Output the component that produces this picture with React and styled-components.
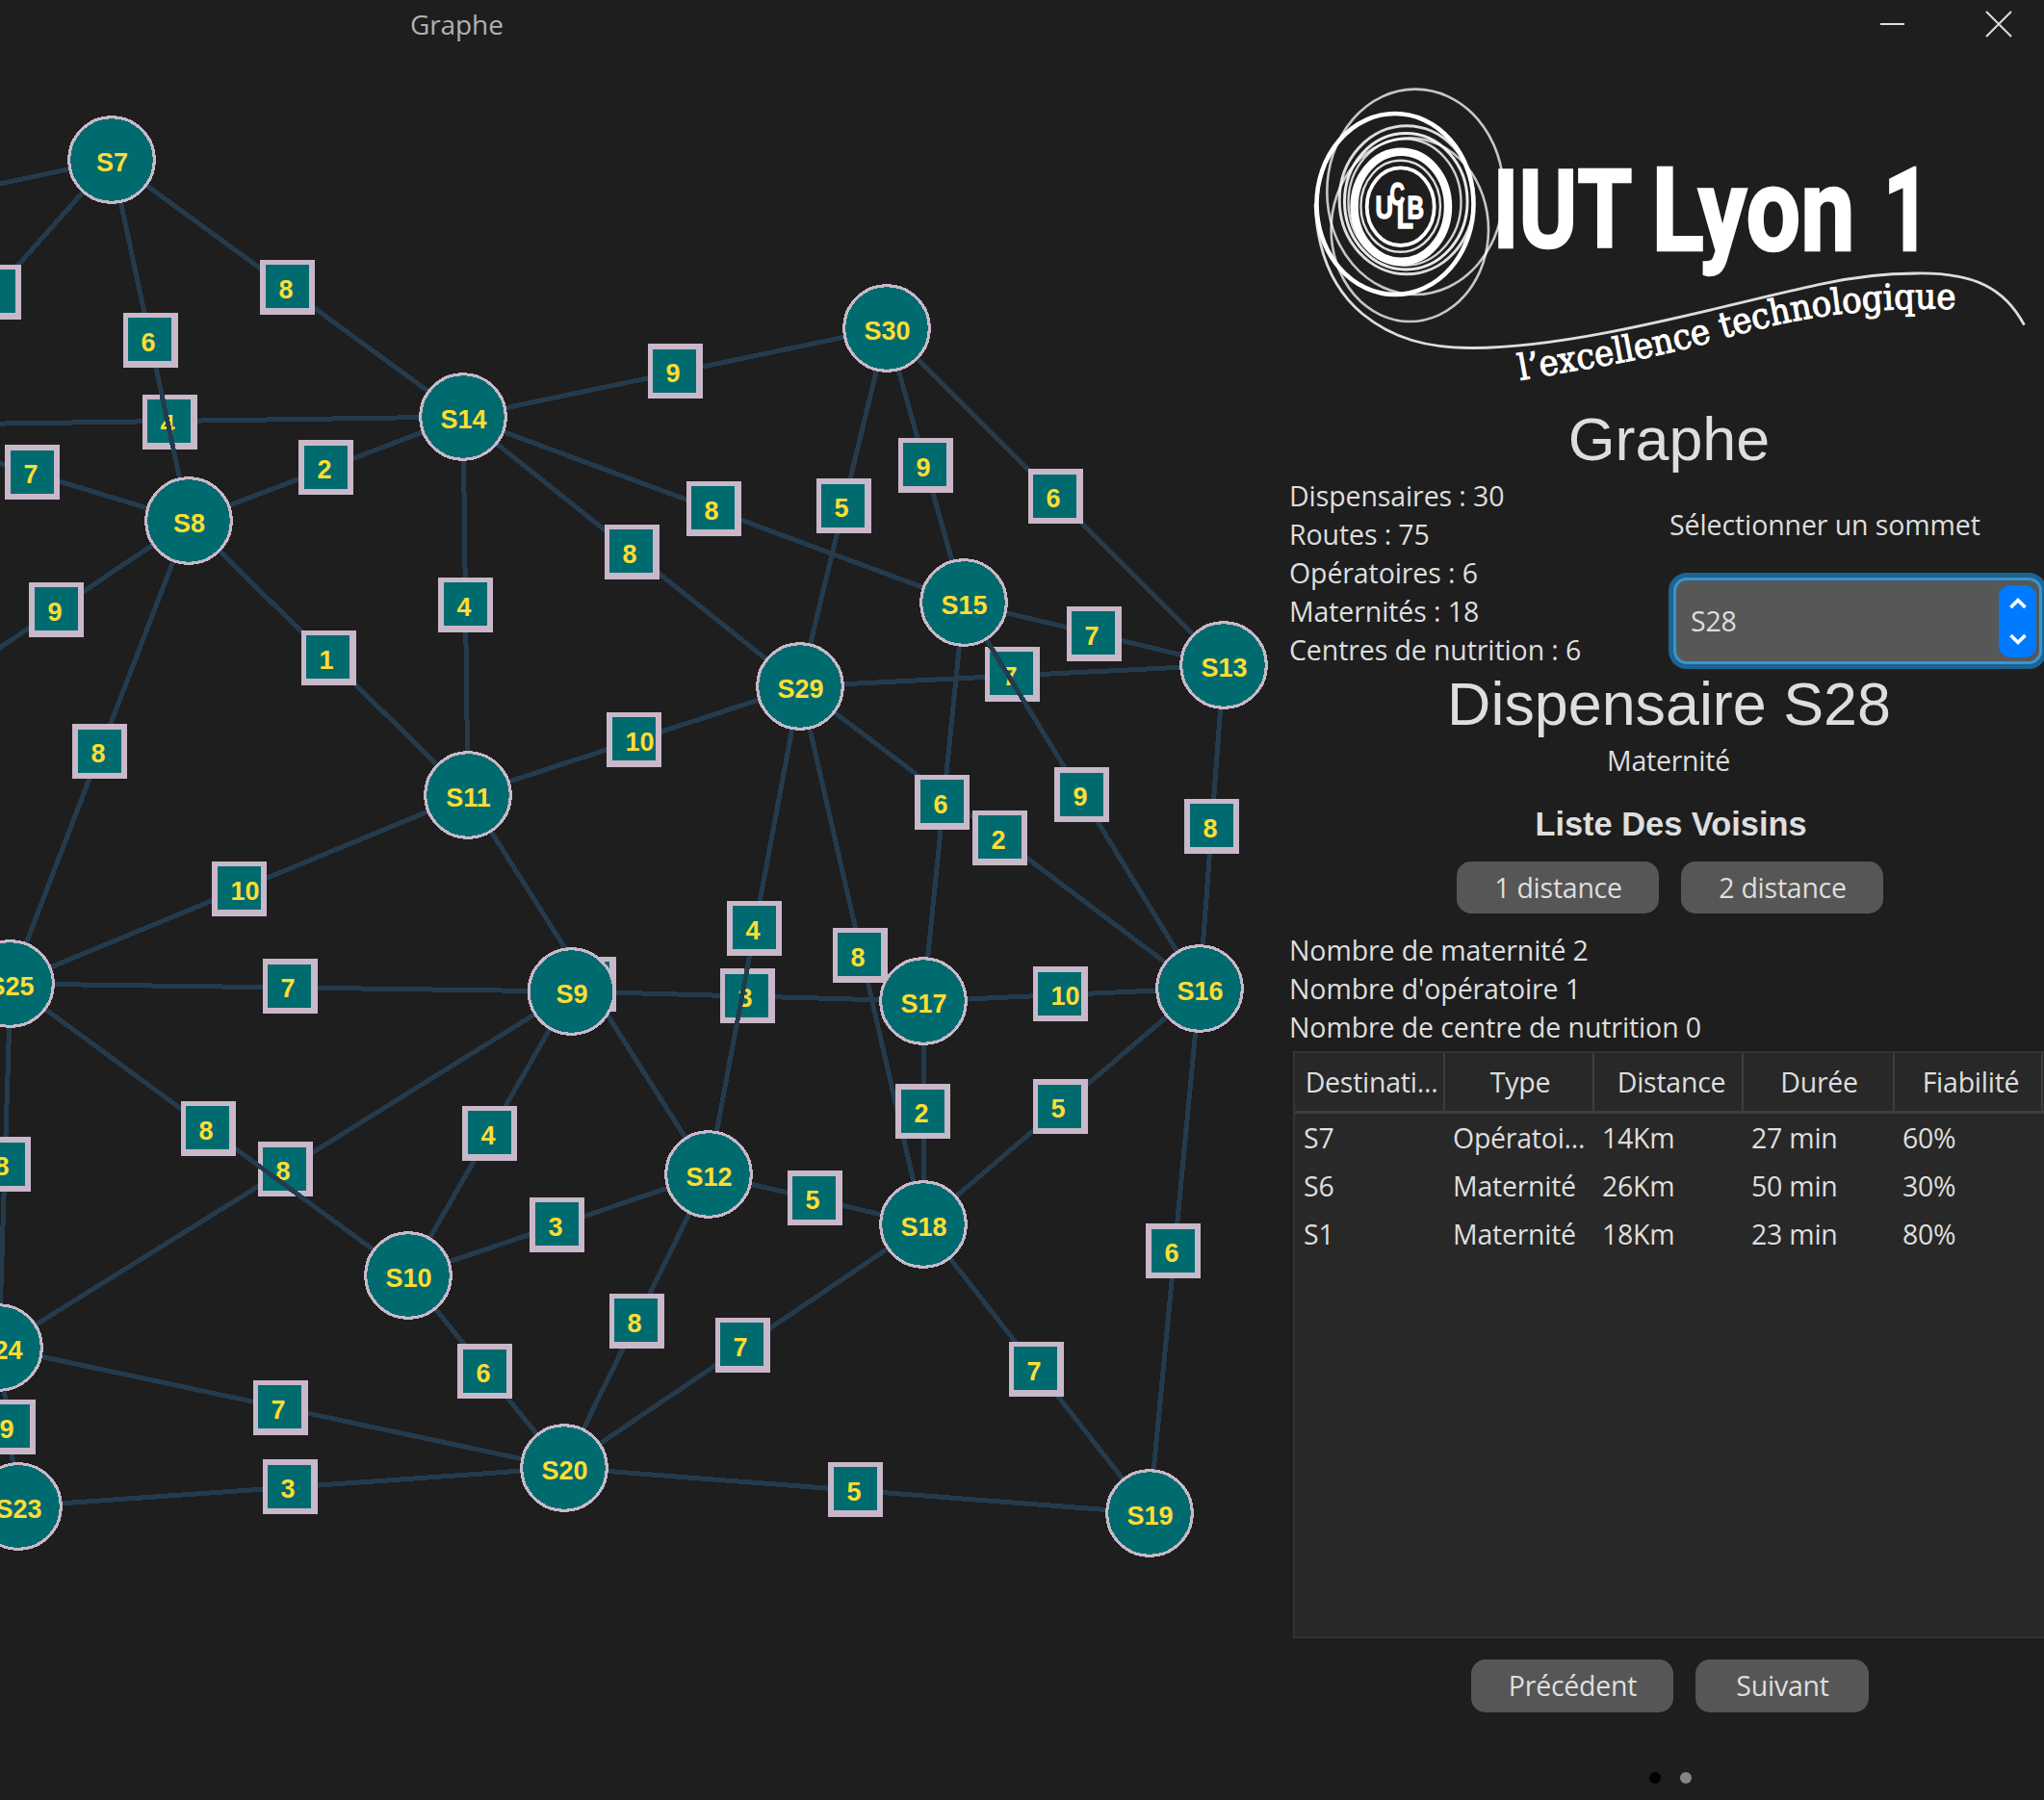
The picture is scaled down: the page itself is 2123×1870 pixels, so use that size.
import React from "react";
import styled, { createGlobalStyle } from "styled-components";

const UI_FONT = `"Open Sans", "Noto Sans", sans-serif`;
const HEAD_FONT = `"Liberation Sans", Arial, sans-serif`;

const GlobalStyle = createGlobalStyle`
  * { box-sizing: border-box; }
  html, body { margin: 0; padding: 0; background: #1e1e1e; overflow: hidden; }
`;

const Window = styled.div`
  width: 2123px;
  height: 1870px;
  display: flex;
  flex-direction: column;
  background: #1e1e1e;
  color: #dedede;
  font-family: ${UI_FONT};
  font-size: 28.5px;
  letter-spacing: -0.25px;
  overflow: hidden;
`;

const TitleBar = styled.header`
  height: 52px;
  flex: none;
  display: flex;
  align-items: flex-start;
  justify-content: space-between;
  padding: 0 33px 0 426px;
`;

const WindowTitle = styled.span`
  font-size: 28px;
  line-height: 50px;
  letter-spacing: -0.1px;
  color: #b2b2b2;
`;

const WindowControls = styled.div`
  display: flex;
  align-items: center;
  gap: 84px;
  padding-top: 11px;
`;

const Body = styled.main`
  display: flex;
  flex: 1;
`;

const GraphCanvas = styled.svg`
  width: 1340px;
  height: 1818px;
  display: block;
  flex: none;
  font: bold 27px ${HEAD_FONT};
  letter-spacing: 0;
`;

const Panel = styled.aside`
  width: 783px;
  padding-top: 18px;
  display: flex;
  flex-direction: column;
`;

const Logo = styled.svg`
  width: 783px;
  height: 350px;
  display: block;
  flex: none;
  letter-spacing: 0;
`;

const Heading = styled.h1`
  margin: 0;
  width: 787px;
  text-align: center;
  font: 400 62.8px/${(p) => p.$line}px ${HEAD_FONT};
  letter-spacing: 0;
`;

const InfoGrid = styled.section`
  display: grid;
  grid-template-columns: 393px 393px;
  margin-top: 2px;
  height: 200px;
`;

const Lines = styled.div`
  display: flex;
  flex-direction: column;
  line-height: 40px;
  letter-spacing: -0.1px;
  white-space: nowrap;
  margin: ${(p) => p.$top || 0}px 0 0 -1px;
`;

const Selector = styled.div`
  display: flex;
  flex-direction: column;
  justify-content: space-between;
  padding-top: 30px;
  line-height: 40px;
`;

const SelectorLabel = styled.label`
  padding-left: 1px;
  letter-spacing: -0.1px;
`;

const Choice = styled.div`
  width: 393px;
  height: 100px;
  border: 5px solid #1d638f;
  border-radius: 19px;
  background: #1d638f;
`;

const ChoiceField = styled.div`
  height: 90px;
  border: 3px solid #3496d3;
  border-radius: 14px;
  background: #575757;
  display: flex;
  align-items: center;
  justify-content: space-between;
  padding: 0 3px 0 15px;
`;

const ChoiceArrows = styled.span`
  width: 39px;
  height: 75px;
  border-radius: 12px;
  background: #007aff;
  display: flex;
  align-items: center;
  justify-content: center;
`;

const Subtitle = styled.p`
  margin: 2px 0 0;
  width: 786px;
  text-align: center;
  line-height: 40px;
`;

const SectionTitle = styled.h2`
  margin: 26px 0 0;
  width: 791px;
  text-align: center;
  font: bold 34.4px/40px ${HEAD_FONT};
  letter-spacing: 0;
`;

const ButtonRow = styled.div`
  display: flex;
  gap: 23px;
  margin-top: ${(p) => p.$top}px;
  padding-left: ${(p) => p.$left}px;
`;

const Button = styled.button`
  width: ${(p) => p.$w}px;
  height: ${(p) => p.$h}px;
  border: 0;
  padding: 0 0 0 1px;
  border-radius: 15px;
  background: #565656;
  color: #dedede;
  font: inherit;
  letter-spacing: inherit;
  line-height: 55px;
`;

const Table = styled.div`
  margin: 5px 0 0 3px;
  width: 790px;
  height: 610px;
  border: 2px solid #343434;
  background: #282828;
  flex: none;
`;

const HeadRow = styled.div`
  display: grid;
  grid-template-columns: 156px 155px 155px 157px 154px;
  height: 63px;
  border-bottom: 3px solid #3d3d3d;
`;

const HeadCell = styled.div`
  border-right: 2px solid #3d3d3d;
  text-align: center;
  line-height: 61px;
  padding-left: ${(p) => p.$shift || 0}px;
  white-space: nowrap;
`;

const DataRow = styled.div`
  display: grid;
  grid-template-columns: 155px 155px 155px 157px 155px;
  line-height: 50px;
`;

const DataCell = styled.div`
  padding-left: 9px;
  white-space: nowrap;
`;

const Pager = styled.div`
  display: flex;
  gap: 20px;
  margin-top: 62px;
  padding-left: 373px;
`;

const Dot = styled.span`
  width: 12px;
  height: 12px;
  border-radius: 50%;
  background: ${(p) => (p.$active ? "#000" : "#858585")};
`;

const NODES = {
  S6: [-129, 442],
  S0: [-116, 216],
  S5: [-79, 726],
  S7: [116, 166],
  S8: [196, 541],
  S14: [481, 433],
  S30: [921, 341],
  S15: [1001, 626],
  S29: [831, 713],
  S13: [1271, 691],
  S11: [486, 826],
  S25: [11, 1022],
  S9: [593.5, 1030],
  S17: [959, 1040],
  S16: [1246, 1027],
  S12: [736, 1220],
  S18: [959, 1272],
  S10: [424, 1325],
  S24: [-1, 1400],
  S20: [586, 1525],
  S23: [19, 1565],
  S19: [1194, 1572],
};

// [from, to, weight, badge x, badge y, inner dx, inner dy]
const EDGES = [
  ["S0", "S7"],
  ["S7", "S6", "", -35, 275, 6, 5],
  ["S14", "S6", 4, 148, 410, 5, 5],
  ["S9", "S17", 3, 748, 1006, 5, 6],
  ["S29", "S13", 7, 1023, 672, 5, 5],
  ["S9", "S24", 8, 268, 1186, 5, 6],
  ["S29", "S16", 2, 1010, 842, 6, 5],
  ["S29", "S18", 8, 865, 964, 5, 5],
  ["S11", "S12", "", 583, 994, 5, 5],
  ["S7", "S14", 8, 270, 270, 6, 5],
  ["S7", "S8", 6, 128, 325, 5, 5],
  ["S8", "S6", 7, 5, 462, 6, 6],
  ["S8", "S14", 2, 310, 457, 6, 6],
  ["S14", "S30", 9, 673, 357, 5, 6],
  ["S8", "S5", 9, 30, 605, 6, 5],
  ["S11", "S14", 4, 455, 600, 6, 5],
  ["S14", "S29", 8, 628, 545, 5, 5],
  ["S8", "S11", 1, 313, 655, 5, 5],
  ["S8", "S25", 8, 75, 752, 6, 6],
  ["S11", "S29", 10, 630, 740, 6, 5],
  ["S11", "S25", 10, 220, 895, 6, 5],
  ["S9", "S25", 7, 273, 996, 5, 6],
  ["S10", "S25", 8, 188, 1144, 5, 5],
  ["S9", "S10", 4, 480, 1149, 6, 5],
  ["S24", "S25", 8, -25, 1181, 6, 6],
  ["S10", "S12", 3, 550, 1244, 6, 5],
  ["S12", "S20", 8, 633, 1344, 5, 5],
  ["S10", "S20", 6, 475, 1396, 6, 6],
  ["S20", "S24", 7, 263, 1434, 5, 5],
  ["S20", "S23", 3, 273, 1516, 5, 6],
  ["S23", "S24", 9, -20, 1454, 6, 5],
  ["S14", "S15", 8, 713, 500, 5, 5],
  ["S29", "S30", 5, 848, 497, 5, 6],
  ["S15", "S30", 9, 933, 455, 5, 5],
  ["S13", "S30", 6, 1068, 487, 5, 6],
  ["S13", "S15", 7, 1108, 630, 5, 5],
  ["S15", "S17", 6, 950, 805, 6, 5],
  ["S15", "S16", 9, 1095, 797, 6, 6],
  ["S13", "S16", 8, 1230, 830, 6, 5],
  ["S12", "S29", 4, 755, 936, 6, 5],
  ["S16", "S17", 10, 1073, 1004, 5, 6],
  ["S17", "S18", 2, 930, 1126, 6, 6],
  ["S16", "S18", 5, 1073, 1121, 5, 6],
  ["S12", "S18", 5, 818, 1216, 5, 6],
  ["S18", "S20", 7, 743, 1369, 5, 5],
  ["S18", "S19", 7, 1048, 1394, 5, 5],
  ["S16", "S19", 6, 1190, 1271, 6, 6],
  ["S19", "S20", 5, 860, 1519, 6, 5],
];

const STATS = [
  "Dispensaires : 30",
  "Routes : 75",
  "Opératoires : 6",
  "Maternités : 18",
  "Centres de nutrition : 6",
];

const COUNTS = ["Nombre de maternité 2", "Nombre d'opératoire 1", "Nombre de centre de nutrition 0"];

const COLUMNS = [
  ["Destinati...", 5],
  ["Type", 3],
  ["Distance", 7],
  ["Durée", 2],
  ["Fiabilité", 6],
];

const ROWS = [
  ["S7", "Opératoi...", "14Km", "27 min", "60%"],
  ["S6", "Maternité", "26Km", "50 min", "30%"],
  ["S1", "Maternité", "18Km", "23 min", "80%"],
];

function Edge({ edge }) {
  const [from, to, weight, x, y, dx, dy] = edge;
  const [x1, y1] = NODES[from];
  const [x2, y2] = NODES[to];
  return (
    <g>
      <line x1={x1} y1={y1} x2={x2} y2={y2} stroke="#243b4d" strokeWidth="5" />
      {weight !== undefined && (
        <>
          <rect x={x} y={y} width="57" height="57" fill="#c9b8c9" />
          <rect x={x + dx} y={y + dy} width="45" height="45" fill="#006b6e" />
          {weight !== "" && (
            <text x={x + dx + 13.5} y={y + 40.4} fill="#ffdd33">
              {weight}
            </text>
          )}
        </>
      )}
    </g>
  );
}

// Edges that run over a neighbour's weight are listed, and painted, after it.
function Graph() {
  return (
    <GraphCanvas viewBox="0 52 1340 1818">
      <g shapeRendering="crispEdges">
        {EDGES.map((edge) => (
          <Edge key={edge[0] + edge[1]} edge={edge} />
        ))}
        {Object.entries(NODES)
          .filter(([, [x]]) => x > -50)
          .map(([name, [x, y]]) => (
            <g key={name}>
              <circle cx={x} cy={y} r="44.3" fill="#006b6e" stroke="#c9b8c9" strokeWidth="3" />
              <text x={x + 0.5} y={y + 11.6} textAnchor="middle" fill="#ffdd33">
                {name}
              </text>
            </g>
          ))}
      </g>
    </GraphCanvas>
  );
}

const BigWord = ({ x, y, size, length, children }) => (
  <text
    x={x}
    y={y}
    textLength={length}
    lengthAdjust="spacingAndGlyphs"
    fontSize={size}
    fontFamily="Roboto, sans-serif"
    fontWeight="700"
    fill="#fff"
    stroke="#fff"
    strokeWidth="2.4"
  >
    {children}
  </text>
);

const Monogram = ({ x, y, size, length, children }) => (
  <text
    x={x}
    y={y}
    textLength={length}
    lengthAdjust="spacingAndGlyphs"
    fontSize={size}
    fontFamily="Liberation Sans, sans-serif"
    fontWeight="700"
    fill="#fff"
    stroke="#fff"
    strokeWidth="1.4"
  >
    {children}
  </text>
);

function IutLogo() {
  return (
    <Logo viewBox="1340 70 783 350">
      <g fill="none" stroke="#fff">
        <ellipse cx="1470" cy="199.3" rx="91.7" ry="106.7" strokeWidth="2.6" strokeOpacity="0.75" />
        <ellipse cx="1464.3" cy="238.7" rx="81.7" ry="95.3" strokeWidth="2.6" strokeOpacity="0.75" />
        <ellipse cx="1449" cy="212" rx="81.5" ry="94" strokeWidth="4.6" />
        <ellipse cx="1461" cy="207.7" rx="69.8" ry="77" strokeWidth="3" strokeOpacity="0.85" />
        <ellipse cx="1460.3" cy="209.3" rx="63.8" ry="70.7" strokeWidth="3" strokeOpacity="0.9" />
        <ellipse cx="1459" cy="210" rx="58.5" ry="65.7" strokeWidth="2.4" strokeOpacity="0.8" />
        <ellipse cx="1455.3" cy="214.7" rx="48.7" ry="57" strokeWidth="8.4" />
        <ellipse cx="1454.7" cy="214.3" rx="41.3" ry="47.5" strokeWidth="2.4" strokeOpacity="0.85" />
        <ellipse cx="1454.7" cy="214.7" rx="35" ry="40.3" strokeWidth="3.8" />
        <path
          d="M1366 212 C1368 262 1384 300 1415 326 C1447 352 1482 361.5 1530 361.5 C1640 361 1790 317 1889 295.7 C1925 287.5 1955 284 1990 284 C2050 283 2082 299 2102.5 337.7"
          strokeWidth="2.8"
          strokeOpacity="0.85"
        />
      </g>
      <Monogram x="1428.5" y="227" size="34" length="18.5">U</Monogram>
      <Monogram x="1443.5" y="213" size="33" length="15.5">C</Monogram>
      <Monogram x="1450.5" y="237" size="41" length="17.5">L</Monogram>
      <Monogram x="1461.5" y="226.5" size="33" length="17.5">B</Monogram>
      <BigWord x="1550.5" y="256.5" size="113" length="145">IUT</BigWord>
      <BigWord x="1715.5" y="259.5" size="120" length="211">Lyon</BigWord>
      <BigWord x="1956" y="259.5" size="120" length="49">1</BigWord>
      <path id="tagline" d="M1579 395 C1650 382 1715 374 1784 353 C1870 329 1930 319 2034 321" fill="none" />
      <text
        fontFamily="DejaVu Serif Condensed, DejaVu Serif, serif"
        fontSize="37"
        fill="#fff"
        stroke="#fff"
        strokeWidth="1"
        textLength="460"
        lengthAdjust="spacingAndGlyphs"
      >
        <textPath href="#tagline" textLength="460" lengthAdjust="spacingAndGlyphs">
          l’excellence technologique
        </textPath>
      </text>
    </Logo>
  );
}

export default function App() {
  return (
    <>
      <GlobalStyle />
      <Window>
        <TitleBar>
          <WindowTitle>Graphe</WindowTitle>
          <WindowControls>
            <svg width="25" height="28" viewBox="0 0 25 28">
              <rect y="13" width="25" height="2" fill="#dedede" />
            </svg>
            <svg width="28" height="28" viewBox="0 0 28 28" stroke="#dedede" strokeWidth="2">
              <path d="M1 1 27 27M27 1 1 27" />
            </svg>
          </WindowControls>
        </TitleBar>
        <Body>
          <Graph />
          <Panel>
            <IutLogo />
            <Heading $line={73}>Graphe</Heading>
            <InfoGrid>
              <Lines>
                {STATS.map((s) => (
                  <span key={s}>{s}</span>
                ))}
              </Lines>
              <Selector>
                <SelectorLabel>Sélectionner un sommet</SelectorLabel>
                <Choice>
                  <ChoiceField>
                    S28
                    <ChoiceArrows>
                      <svg width="20" height="52" viewBox="0 0 20 52" fill="none" stroke="#fff" strokeWidth="3.6">
                        <path d="M2.5 12 10 4.5 17.5 12M2.5 41 10 48.5 17.5 41" />
                      </svg>
                    </ChoiceArrows>
                  </ChoiceField>
                </Choice>
              </Selector>
            </InfoGrid>
            <Heading $line={73}>Dispensaire S28</Heading>
            <Subtitle>Maternité</Subtitle>
            <SectionTitle>Liste Des Voisins</SectionTitle>
            <ButtonRow $top={19} $left={173}>
              <Button $w={210} $h={54}>1 distance</Button>
              <Button $w={210} $h={54}>2 distance</Button>
            </ButtonRow>
            <Lines $top={18}>
              {COUNTS.map((s) => (
                <span key={s}>{s}</span>
              ))}
            </Lines>
            <Table>
              <HeadRow>
                {COLUMNS.map(([name, shift]) => (
                  <HeadCell key={name} $shift={shift}>
                    {name}
                  </HeadCell>
                ))}
              </HeadRow>
              {ROWS.map((row) => (
                <DataRow key={row[0]}>
                  {row.map((cell) => (
                    <DataCell key={cell}>{cell}</DataCell>
                  ))}
                </DataRow>
              ))}
            </Table>
            <ButtonRow $top={22} $left={188}>
              <Button $w={210} $h={55}>Précédent</Button>
              <Button $w={180} $h={55}>Suivant</Button>
            </ButtonRow>
            <Pager>
              <Dot $active />
              <Dot />
            </Pager>
          </Panel>
        </Body>
      </Window>
    </>
  );
}
